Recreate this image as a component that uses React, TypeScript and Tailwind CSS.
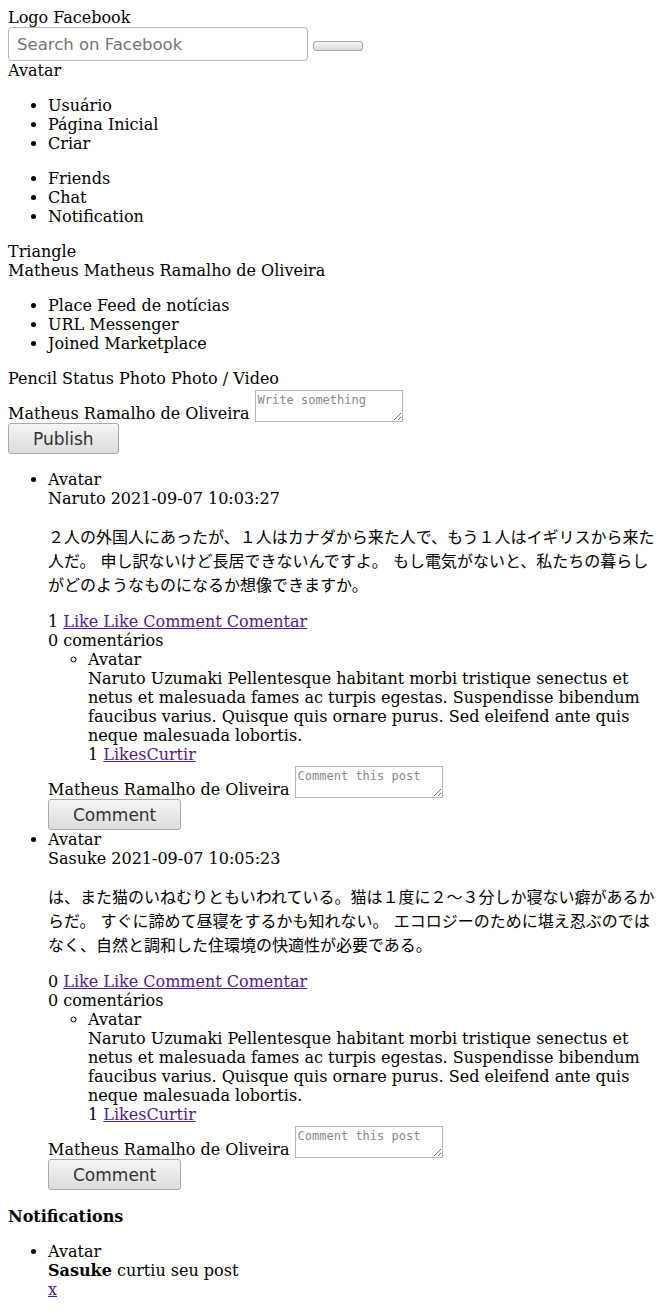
import React from "react";

interface Post {
  author: string;
  date: string;
  text: string;
  likes: number;
}

const posts: Post[] = [
  {
    author: "Naruto",
    date: "2021-09-07 10:03:27",
    text: "２人の外国人にあったが、１人はカナダから来た人で、もう１人はイギリスから来た人だ。 申し訳ないけど長居できないんですよ。 もし電気がないと、私たちの暮らしがどのようなものになるか想像できますか。",
    likes: 1,
  },
  {
    author: "Sasuke",
    date: "2021-09-07 10:05:23",
    text: "は、また猫のいねむりともいわれている。猫は１度に２～３分しか寝ない癖があるからだ。 すぐに諦めて昼寝をするかも知れない。 エコロジーのために堪え忍ぶのではなく、自然と調和した住環境の快適性が必要である。",
    likes: 0,
  },
];

const buttonClass =
  "h-[31px] rounded-[3px] border border-[#a9a9a9] bg-linear-to-b from-[#f5f5f5] to-[#dcdcdc] px-[24px] font-['DejaVu_Sans',sans-serif] text-[17px] leading-[normal] text-[#333]";

// textarea sits on the text-bottom like the browser default one
const textareaClass =
  "mt-[2px] mb-[1px] h-[32px] w-[148px] border border-[#b5b5b5] bg-white p-[2px] align-text-bottom font-['DejaVu_Sans_Mono',monospace] text-[12px] leading-[normal] placeholder:text-[#8a8a8a]";

function PostItem({ post }: { post: Post }) {
  return (
    <li>
      <div>Avatar</div>
      <div>
        {post.author} {post.date}
      </div>
      <p className="my-4">{post.text}</p>
      <div>
        {post.likes} <a href="#" className="text-[#551a8b] underline">Like Like Comment Comentar</a>
      </div>
      <div>0 comentários</div>
      <ul className="list-[circle] pl-10">
        <li>
          <div>Avatar</div>
          <div>
            Naruto Uzumaki Pellentesque habitant morbi tristique senectus et netus et malesuada fames ac
            turpis egestas. Suspendisse bibendum faucibus varius. Quisque quis ornare purus. Sed eleifend
            ante quis neque malesuada lobortis.
          </div>
          <div>
            1 <a href="#" className="text-[#551a8b] underline">LikesCurtir</a>
          </div>
        </li>
      </ul>
      <div>
        Matheus Ramalho de Oliveira <textarea className={textareaClass} placeholder="Comment this post" />
      </div>
      <div>
        <button className={buttonClass}>Comment</button>
      </div>
    </li>
  );
}

export default function App() {
  return (
    <div className="p-2 font-['DejaVu_Serif','Noto_Sans_CJK_JP',serif] text-[16px] leading-[normal] text-black">
      {/* top bar */}
      <div>Logo Facebook</div>
      <div>
        <input
          className="h-[34px] w-[300px] rounded-[4px] border border-[#b9b9b9] bg-white px-2 font-['DejaVu_Sans',sans-serif] text-[16.5px] placeholder:text-[#757575]"
          placeholder="Search on Facebook"
        />{" "}
        <button className="h-[10px] w-[50px] rounded-[3px] border border-[#a9a9a9] bg-linear-to-b from-[#f5f5f5] to-[#dcdcdc] align-baseline" />
      </div>
      <div>Avatar</div>
      <ul className="my-4 list-disc pl-10">
        <li>Usuário</li>
        <li>Página Inicial</li>
        <li>Criar</li>
      </ul>
      <ul className="my-4 list-disc pl-10">
        <li>Friends</li>
        <li>Chat</li>
        <li>Notification</li>
      </ul>

      {/* sidebar */}
      <div>Triangle</div>
      <div>Matheus Matheus Ramalho de Oliveira</div>
      <ul className="my-4 list-disc pl-10">
        <li>Place Feed de notícias</li>
        <li>URL Messenger</li>
        <li>Joined Marketplace</li>
      </ul>

      {/* composer */}
      <div>Pencil Status Photo Photo / Video</div>
      <div>
        Matheus Ramalho de Oliveira <textarea className={textareaClass} placeholder="Write something" />
      </div>
      <div>
        <button className={buttonClass}>Publish</button>
      </div>

      {/* feed */}
      <ul className="my-4 list-disc pl-10">
        {posts.map((post) => (
          <PostItem key={post.date} post={post} />
        ))}
      </ul>

      {/* notifications */}
      <h4 className="mt-[17px] mb-4 font-bold">Notifications</h4>
      <ul className="my-4 list-disc pl-10">
        <li>
          <div>Avatar</div>
          <div>
            <b>Sasuke</b> curtiu seu post
          </div>
          <div>
            <a href="#" className="text-[#551a8b] underline">x</a>
          </div>
        </li>
      </ul>
    </div>
  );
}
